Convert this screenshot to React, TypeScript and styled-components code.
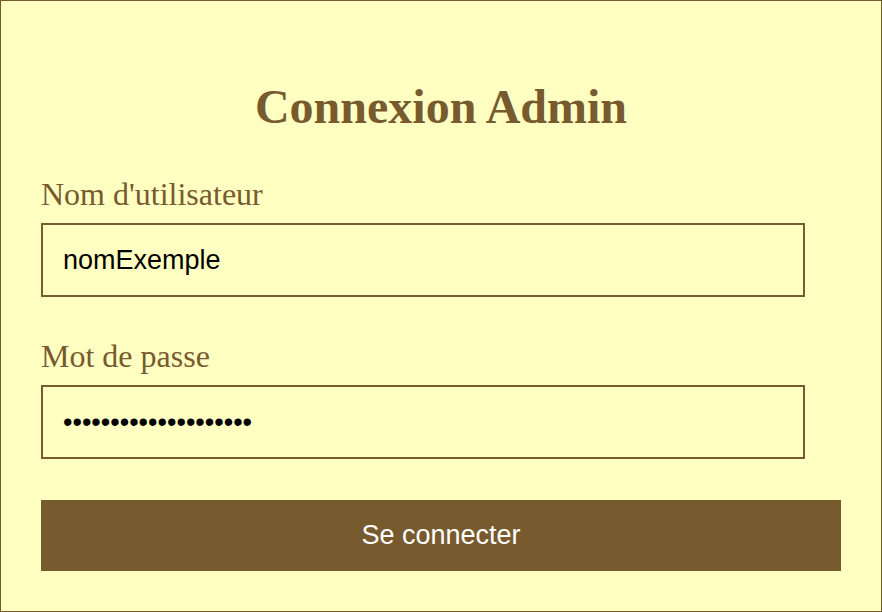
import React from "react";
import styled, { createGlobalStyle } from "styled-components";

const brown = "#785a2f";
const cream = "#ffffc2";

const Global = createGlobalStyle`
  html, body { margin: 0; padding: 0; background: ${cream}; }
  * { box-sizing: border-box; }
`;

const Card = styled.div`
  width: 882px;
  height: 612px;
  border: 1px solid ${brown};
  background: ${cream};
  padding: 0 40px;
  display: flex;
  flex-direction: column;
`;

const Title = styled.h1`
  margin: 79px 0 42px;
  font-family: "Liberation Serif", "Times New Roman", serif;
  font-weight: 700;
  font-size: 48px;
  line-height: 54px;
  color: ${brown};
  text-align: center;
`;

const Form = styled.form`
  display: flex;
  flex-direction: column;
`;

const Field = styled.div`
  display: flex;
  flex-direction: column;
  margin-bottom: 41px;
`;

const Label = styled.label`
  font-family: "Liberation Serif", "Times New Roman", serif;
  font-size: 32px;
  line-height: 36px;
  color: ${brown};
  margin-bottom: 11px;
`;

const Input = styled.input`
  width: 764px;
  height: 74px;
  border: 2px solid ${brown};
  background: ${cream};
  padding: 0 20px;
  font-family: "Liberation Sans", Arial, sans-serif;
  font-size: 27px;
  color: #000;
  outline: none;
`;

const Button = styled.button`
  width: 800px;
  height: 71px;
  border: none;
  background: ${brown};
  color: #fff;
  font-family: "Liberation Sans", Arial, sans-serif;
  font-size: 27px;
  cursor: pointer;
`;

export default function App() {
  return (
    <>
      <Global />
      <Card>
        <Title>Connexion Admin</Title>
        <Form onSubmit={(e) => e.preventDefault()}>
          <Field>
            <Label htmlFor="user">Nom d'utilisateur</Label>
            <Input id="user" type="text" defaultValue="nomExemple" />
          </Field>
          <Field>
            <Label htmlFor="pass">Mot de passe</Label>
            <Input id="pass" type="password" defaultValue="motdepasse12345678ab" />
          </Field>
          <Button type="submit">Se connecter</Button>
        </Form>
      </Card>
    </>
  );
}
